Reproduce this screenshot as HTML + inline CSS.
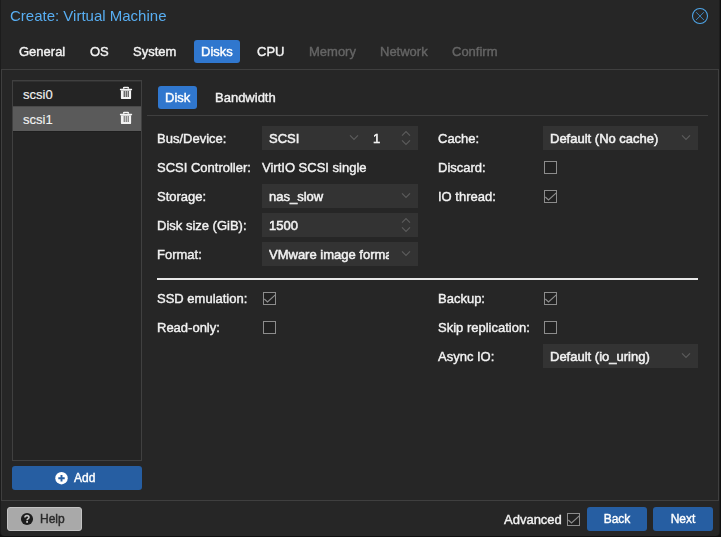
<!DOCTYPE html>
<html><head><meta charset="utf-8">
<style>
*{box-sizing:border-box;margin:0;padding:0}
html,body{width:721px;height:537px;overflow:hidden;background:#101010}
body{-webkit-text-stroke:0.4px;font-family:"Liberation Sans",sans-serif;font-size:13px;color:#f2f2f2;position:relative}
.abs{position:absolute}
#layer{position:absolute;left:0;top:0;width:721px;height:537px;will-change:transform}
#win{position:absolute;left:0;top:0;width:720px;height:536px;background:#262626;border-left:1px solid #1c1c1c;border-right:1px solid #1d1d1d;border-radius:0 0 4px 4px}
#title{left:10px;top:7px;font-size:15px;line-height:18px;color:#58aef2;-webkit-text-stroke:0;white-space:nowrap}
.tab{top:40px;height:23px;line-height:23px;font-size:13px;color:#f2f2f2;white-space:nowrap;padding:0 7px;border-radius:3px}
.tab.act{background:#3077ce;color:#fff}
.tab.dis{color:#656565}
#body{left:1px;top:69px;width:718px;height:432px;border:1px solid #3f3f3f}
#list{left:12px;top:80px;width:130px;height:381px;border:1px solid #404040;background:#242424;box-shadow:inset 0 1px 0 #303030}
.row{-webkit-text-stroke:0.15px;position:absolute;left:0;width:128px;height:24px;line-height:26px;padding-left:10px;font-size:13px;color:#f2f2f2}
.row.sel{background:#5a5a5a}
.btn{border-radius:3px;text-align:center;white-space:nowrap;font-size:12px}
.blue{background:#265ea2;color:#fff}
.lbl{font-size:13px;line-height:26px;height:24px;color:#f2f2f2;white-space:nowrap}
.fld{-webkit-text-stroke:0.5px;background:#333;height:24px;line-height:26px;font-size:13px;color:#f2f2f2;padding-left:7px;white-space:nowrap;overflow:hidden}
.cb{width:13px;height:13px;border:1px solid #8c8c8c;background:#212121}
svg{position:absolute;overflow:visible}
.chev{fill:none;stroke:#5c5c5c;stroke-width:1.1}
.chk{fill:none;stroke:#8c8c8c;stroke-width:1.2}
</style></head><body>
<div id="win"></div>
<div class="abs" id="list">
  <div class="row" style="top:1px">scsi0</div>
  <div class="row sel" style="top:25px;height:25px;line-height:25px;border-top:1px solid #4a4a4a;box-shadow:0 1px 0 #1e1e1e">scsi1</div>
</div>
<div id="layer">
<div class="abs" id="title">Create: Virtual Machine</div>
<svg style="left:692px;top:8px" width="16" height="16" viewBox="0 0 16 16"><circle cx="8" cy="8" r="7.5" fill="none" stroke="#4ea5e8" stroke-width="1.05"/><path d="M4.1 4.2 L11.9 12 M11.9 4.2 L4.1 12" stroke="#3f8fcf" stroke-width="0.9" fill="none"/></svg>

<div class="abs tab" style="left:12px">General</div>
<div class="abs tab" style="left:83px">OS</div>
<div class="abs tab" style="left:126px">System</div>
<div class="abs tab act" style="left:194px">Disks</div>
<div class="abs tab" style="left:250px">CPU</div>
<div class="abs tab dis" style="left:302px">Memory</div>
<div class="abs tab dis" style="left:373px">Network</div>
<div class="abs tab dis" style="left:445px">Confirm</div>

<div class="abs" id="body"></div>

<svg style="left:120px;top:87px" width="12" height="12" viewBox="0 0 12 12"><g fill="#f4f4f4"><path d="M2.9 1.8 V1 Q2.9 -0.2 4.1 -0.2 H7.9 Q9.1 -0.2 9.1 1 V1.8 H7.7 V1.4 Q7.7 0.9 7.2 0.9 H4.8 Q4.3 0.9 4.3 1.4 V1.8 Z"/><rect x="-0.1" y="1.7" width="12.2" height="1.5" rx="0.5"/><path d="M0.9 3.2 H11.1 V10.9 Q11.1 12.1 9.9 12.1 H2.1 Q0.9 12.1 0.9 10.9 Z"/></g><g fill="#303030"><rect x="3.7" y="4" width="1" height="6"/><rect x="5.7" y="4" width="1" height="6"/><rect x="7.7" y="4" width="1" height="6"/></g></svg>
<svg style="left:120px;top:112px" width="12" height="12" viewBox="0 0 12 12"><g fill="#f4f4f4"><path d="M2.9 1.8 V1 Q2.9 -0.2 4.1 -0.2 H7.9 Q9.1 -0.2 9.1 1 V1.8 H7.7 V1.4 Q7.7 0.9 7.2 0.9 H4.8 Q4.3 0.9 4.3 1.4 V1.8 Z"/><rect x="-0.1" y="1.7" width="12.2" height="1.5" rx="0.5"/><path d="M0.9 3.2 H11.1 V10.9 Q11.1 12.1 9.9 12.1 H2.1 Q0.9 12.1 0.9 10.9 Z"/></g><g fill="#606060"><rect x="3.7" y="4" width="1" height="6"/><rect x="5.7" y="4" width="1" height="6"/><rect x="7.7" y="4" width="1" height="6"/></g></svg>

<div class="abs btn blue" style="left:12px;top:466px;width:130px;height:24px;line-height:24px;padding-left:62px;text-align:left">Add</div>
<svg style="left:55px;top:472px" width="13" height="13" viewBox="0 0 13 13"><circle cx="6.5" cy="6.2" r="6.2" fill="#fff"/><path d="M3.3 6.2 H9.7 M6.5 3 V9.4" stroke="#265ea2" stroke-width="1.9" fill="none"/></svg>

<!-- sub tabs -->
<div class="abs tab act" style="left:158px;top:86px">Disk</div>
<div class="abs tab" style="left:208px;top:86px">Bandwidth</div>
<div class="abs" style="left:147px;top:115px;width:561px;height:1px;background:#3f3f3f"></div>

<!-- left column -->
<div class="abs lbl" style="left:157px;top:126px">Bus/Device:</div>
<div class="abs fld" style="left:262px;top:126px;width:104px">SCSI</div>
<svg style="left:350px;top:135px" width="8" height="5" viewBox="0 0 8 5"><path class="chev" d="M0 0.3 L4 4.5 L8 0.3"/></svg>
<div class="abs fld" style="left:366px;top:126px;width:52px">1</div>
<svg style="left:402px;top:131px" width="8" height="14" viewBox="0 0 8 14"><path class="chev" d="M0 4.7 L4 0.5 L8 4.7 M0 9.3 L4 13.5 L8 9.3"/></svg>
<div class="abs lbl" style="left:157px;top:155px">SCSI Controller:</div>
<div class="abs lbl" style="left:262px;top:155px">VirtIO SCSI single</div>
<div class="abs lbl" style="left:157px;top:184px">Storage:</div>
<div class="abs fld" style="left:262px;top:184px;width:156px">nas_slow</div>
<svg style="left:402px;top:193px" width="8" height="5" viewBox="0 0 8 5"><path class="chev" d="M0 0.3 L4 4.5 L8 0.3"/></svg>
<div class="abs lbl" style="left:157px;top:213px">Disk size (GiB):</div>
<div class="abs fld" style="left:262px;top:213px;width:156px">1500</div>
<svg style="left:402px;top:218px" width="8" height="14" viewBox="0 0 8 14"><path class="chev" d="M0 4.7 L4 0.5 L8 4.7 M0 9.3 L4 13.5 L8 9.3"/></svg>
<div class="abs lbl" style="left:157px;top:242px">Format:</div>
<div class="abs fld" style="left:262px;top:242px;width:156px"><span style="display:inline-block;width:120px;overflow:hidden;vertical-align:top">VMware image format</span></div>
<svg style="left:402px;top:251px" width="8" height="5" viewBox="0 0 8 5"><path class="chev" d="M0 0.3 L4 4.5 L8 0.3"/></svg>

<!-- right column -->
<div class="abs lbl" style="left:438px;top:126px">Cache:</div>
<div class="abs fld" style="left:543px;top:126px;width:155px">Default (No cache)</div>
<svg style="left:682px;top:135px" width="8" height="5" viewBox="0 0 8 5"><path class="chev" d="M0 0.3 L4 4.5 L8 0.3"/></svg>
<div class="abs lbl" style="left:438px;top:155px">Discard:</div>
<div class="abs cb" style="left:544px;top:161px"></div>
<div class="abs lbl" style="left:438px;top:184px">IO thread:</div>
<div class="abs cb" style="left:544px;top:190px"></div>
<svg style="left:544px;top:190px" width="13" height="13" viewBox="0 0 13 13"><path class="chk" d="M1.3 7 L4.5 10 L12.6 2.6"/></svg>

<div class="abs" style="left:157px;top:278px;width:541px;height:2px;background:#e8e8e8"></div>

<div class="abs lbl" style="left:157px;top:286px">SSD emulation:</div>
<div class="abs cb" style="left:263px;top:292px"></div>
<svg style="left:263px;top:292px" width="13" height="13" viewBox="0 0 13 13"><path class="chk" d="M1.3 7 L4.5 10 L12.6 2.6"/></svg>
<div class="abs lbl" style="left:157px;top:315px">Read-only:</div>
<div class="abs cb" style="left:263px;top:321px"></div>

<div class="abs lbl" style="left:438px;top:286px">Backup:</div>
<div class="abs cb" style="left:544px;top:292px"></div>
<svg style="left:544px;top:292px" width="13" height="13" viewBox="0 0 13 13"><path class="chk" d="M1.3 7 L4.5 10 L12.6 2.6"/></svg>
<div class="abs lbl" style="left:438px;top:315px">Skip replication:</div>
<div class="abs cb" style="left:544px;top:321px"></div>
<div class="abs lbl" style="left:438px;top:344px">Async IO:</div>
<div class="abs fld" style="left:543px;top:344px;width:155px">Default (io_uring)</div>
<svg style="left:682px;top:353px" width="8" height="5" viewBox="0 0 8 5"><path class="chev" d="M0 0.3 L4 4.5 L8 0.3"/></svg>

<!-- bottom bar -->
<div class="abs btn" style="left:7px;top:507px;width:75px;height:24px;line-height:22px;background:#a9a9a9;border:1px solid #c2c2c2;color:#2a2a2a;padding-left:32px;text-align:left">Help</div>
<svg style="left:21.4px;top:512.8px" width="12" height="12" viewBox="0 0 12 12"><circle cx="6" cy="6" r="6.05" fill="#1d1d1d"/><path d="M3.9 4.5 Q4 2.6 6 2.6 Q8 2.6 8 4.3 Q8 5.2 7 5.8 Q6.1 6.3 6.1 7.2" fill="none" stroke="#c4c4c4" stroke-width="1.6"/><rect x="5.2" y="8" width="1.8" height="1.8" fill="#c4c4c4"/></svg>
<div class="abs lbl" style="left:504px;top:507px">Advanced</div>
<div class="abs cb" style="left:567px;top:513px"></div>
<svg style="left:567px;top:513px" width="13" height="13" viewBox="0 0 13 13"><path class="chk" d="M1.3 7 L4.5 10 L12.6 2.6"/></svg>
<div class="abs btn blue" style="left:587px;top:507px;width:60px;height:24px;line-height:24px">Back</div>
<div class="abs btn blue" style="left:653px;top:507px;width:60px;height:24px;line-height:24px">Next</div>
</div>
</body></html>
